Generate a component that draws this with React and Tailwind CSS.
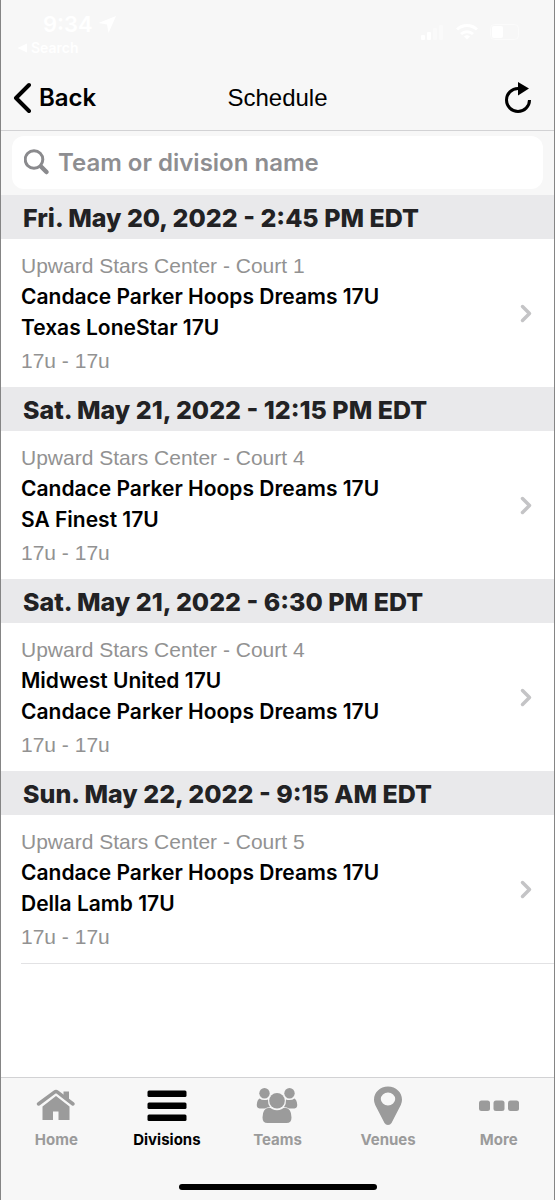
import { useState } from "react";

const games = [
  {
    time: "Fri. May 20, 2022 - 2:45 PM EDT",
    venue: "Upward Stars Center - Court 1",
    home: "Candace Parker Hoops Dreams 17U",
    away: "Texas LoneStar 17U",
    division: "17u - 17u",
  },
  {
    time: "Sat. May 21, 2022 - 12:15 PM EDT",
    venue: "Upward Stars Center - Court 4",
    home: "Candace Parker Hoops Dreams 17U",
    away: "SA Finest 17U",
    division: "17u - 17u",
  },
  {
    time: "Sat. May 21, 2022 - 6:30 PM EDT",
    venue: "Upward Stars Center - Court 4",
    home: "Midwest United 17U",
    away: "Candace Parker Hoops Dreams 17U",
    division: "17u - 17u",
  },
  {
    time: "Sun. May 22, 2022 - 9:15 AM EDT",
    venue: "Upward Stars Center - Court 5",
    home: "Candace Parker Hoops Dreams 17U",
    away: "Della Lamb 17U",
    division: "17u - 17u",
  },
];

// tab icons share a 44x40 box
const tabs = [
  {
    name: "Home",
    icon: (
      <>
        <path d="M29.500 5.500h5.500v11l-5.500-5z" />
        <path
          d="M4.500 18L20.500 6.200q1.500-1.100 3 0L39 18"
          fill="none"
          stroke="currentColor"
          strokeWidth="3.500"
          strokeLinecap="round"
        />
        <path d="M22 10L35.500 20.500V34h-11v-8.500H19V34H8.500V20.500z" />
      </>
    ),
  },
  {
    name: "Divisions",
    icon: (
      <>
        <rect x="2.500" y="4.500" width="39" height="6.500" rx="1.500" />
        <rect x="2.500" y="16.500" width="39" height="6.500" rx="1.500" />
        <rect x="2.500" y="28.500" width="39" height="6.500" rx="1.500" />
      </>
    ),
  },
  {
    name: "Teams",
    icon: (
      <>
        <circle cx="9.500" cy="7.300" r="5.200" />
        <circle cx="34.500" cy="7.300" r="5.200" />
        <circle cx="22" cy="14.700" r="7.800" />
        <path d="M4.500 12.500q2 1.500 5 1.500 2 0 3.500-.5-.3 4.500 2 7.500-3 .2-5 1.500H4.500Q1.500 22 1.800 18.500q.3-4.500 2.700-6z" />
        <path d="M39.500 12.500q-2 1.500-5 1.500-2 0-3.500-.5.3 4.500-2 7.500 3 .2 5 1.500h5.500q3-.5 2.700-4-.3-4.500-2.700-6z" />
        <path d="M14 21.800q1.500 0 3 1.100 5 2.600 10 0 1.500-1.100 3-1.100 6.500.7 6.500 9.700 0 5.500-5 5.500h-19q-5 0-5-5.500 0-9 6.500-9.700z" />
      </>
    ),
  },
  {
    name: "Venues",
    icon: (
      <path
        fillRule="evenodd"
        d="M22 .5C14 .5 8 6.500 8 13.700q0 2.800 1.200 5.300l9.300 18q1.200 2 3.500 2t3.500-2l9.300-18Q36 16.500 36 13.700C36 6.500 30 .5 22 .5zM22 6.500a7.200 6.500 0 1 1 0 13 7.200 6.500 0 1 1 0-13z"
      />
    ),
  },
  {
    name: "More",
    icon: (
      <>
        <rect x="2" y="14.500" width="11" height="10.500" rx="2.500" />
        <rect x="16.500" y="14.500" width="11" height="10.500" rx="2.500" />
        <rect x="31" y="14.500" width="11" height="10.500" rx="2.500" />
      </>
    ),
  },
];

function StatusBar() {
  return (
    <div className="flex h-[66px] items-start justify-between pt-3 pr-8 pl-4 text-white">
      <div>
        <div className="flex items-center gap-1 pl-[26px] text-[22px] leading-6 font-semibold">
          9:34
          <svg className="size-5" viewBox="0 0 20 20" fill="currentColor">
            <path d="M19 2l-7.500 17-1.500-8.500L1.500 9z" />
          </svg>
        </div>
        <a href="#search" className="flex items-center gap-1 text-sm leading-6 font-semibold">
          <svg className="size-2.5" viewBox="0 0 10 10" fill="currentColor">
            <path d="M10 0.500v9L0.500 5z" />
          </svg>
          Search
        </a>
      </div>
      <div className="flex items-center gap-3 pt-3">
        <svg className="h-4 w-6" viewBox="0 0 24 16" fill="currentColor">
          <rect x="1" y="11" width="4" height="5" rx="1" />
          <rect x="7" y="8" width="4" height="8" rx="1" />
          <rect x="13" y="4" width="4" height="12" rx="1" opacity="0.400" />
          <rect x="19" y="1" width="4" height="15" rx="1" opacity="0.400" />
        </svg>
        <svg className="h-4 w-[22px]" viewBox="0 0 22 16" fill="none" stroke="currentColor" strokeWidth="3">
          <path d="M1 5.500a14.500 14.500 0 0 1 20 0M5 10a9 9 0 0 1 12 0" />
          <path d="M11 15.500l-3-3a4.500 4.500 0 0 1 6 0z" fill="currentColor" stroke="none" />
        </svg>
        <svg className="h-4 w-8" viewBox="0 0 32 16">
          <rect x="0.500" y="0.500" width="28" height="15" rx="4" fill="none" stroke="currentColor" opacity="0.500" />
          <rect x="2" y="2" width="11" height="12" rx="2" fill="currentColor" />
        </svg>
      </div>
    </div>
  );
}

function GameRow({ game }) {
  return (
    <li>
      <h2 className="bg-[#e9e9eb] pt-0.5 pl-[22px] text-[25px] leading-[42px] font-extrabold text-[#222224]">
        {game.time}
      </h2>
      <button className="flex w-full items-center justify-between py-[11px] pr-5 pl-5 text-left text-[21px]">
        <span className="block">
          <span className="block font-['Liberation_Sans',sans-serif] leading-[31px] text-[#929292]">
            {game.venue}
          </span>
          <span className="block leading-[31px] font-semibold text-black">{game.home}</span>
          <span className="block leading-[31px] font-semibold text-black">{game.away}</span>
          <span className="mt-0.5 block font-['Liberation_Sans',sans-serif] leading-[31px] text-[#929292]">
            {game.division}
          </span>
        </span>
        <svg
          className="h-5 w-4 text-[#c4c4c6]"
          viewBox="0 0 16 20"
          fill="none"
          stroke="currentColor"
          strokeWidth="3.500"
          strokeLinecap="round"
          strokeLinejoin="round"
        >
          <path d="M4.500 3.500l7 7-7 7" />
        </svg>
      </button>
    </li>
  );
}

export default function App() {
  const [query, setQuery] = useState("");
  const [active, setActive] = useState("Divisions");

  const shown = games.filter((g) =>
    `${g.home} ${g.away} ${g.division}`.toLowerCase().includes(query.toLowerCase())
  );

  return (
    <div className="flex min-h-screen flex-col border-x border-[#858585] bg-white font-['Inter',sans-serif]">
      <header className="border-b border-[#d2d2d4] bg-[#f7f7f7]">
        <StatusBar />
        <div className="grid h-16 grid-cols-[1fr_auto_1fr] items-center px-3">
          <button className="flex items-center gap-2 text-2xl font-semibold text-black">
            <svg
              className="h-8 w-[18px]"
              viewBox="0 0 18 32"
              fill="none"
              stroke="currentColor"
              strokeWidth="4"
              strokeLinecap="round"
              strokeLinejoin="round"
            >
              <path d="M16 3L3 16l13 13" />
            </svg>
            Back
          </button>
          <h1 className="font-['Liberation_Sans',sans-serif] text-2xl text-black">Schedule</h1>
          <button aria-label="Refresh" className="mr-2.5 justify-self-end">
            <svg className="h-8 w-7" viewBox="0 0 28 32" fill="none">
              <path d="M14 6.500a11.500 11.500 0 1 0 11.500 11.500" stroke="#000" strokeWidth="3" />
              <path d="M14 0l11 6.500-11 7z" fill="#000" />
            </svg>
          </button>
        </div>
      </header>

      <div className="bg-[#f7f7f7] px-[11px] pt-[5px] pb-1.5">
        <label className="flex h-[53px] items-center gap-1.5 rounded-xl bg-white px-3">
          <svg
            className="size-7 shrink-0 text-[#8a8a8d]"
            viewBox="0 0 28 28"
            fill="none"
            stroke="currentColor"
            strokeWidth="3"
            strokeLinecap="round"
          >
            <circle cx="10" cy="10.500" r="8.800" />
            <path d="M17 17.500l5.500 5.500" strokeWidth="4.500" />
          </svg>
          <input
            type="text"
            aria-label="Team or division name"
            placeholder="Team or division name"
            value={query}
            onChange={(e) => setQuery(e.target.value)}
            className="w-full bg-transparent text-2xl font-semibold text-black outline-none placeholder:text-[#8e8e91]"
          />
        </label>
      </div>

      <main className="flex-1">
        <ul>
          {shown.map((game) => (
            <GameRow key={game.time} game={game} />
          ))}
        </ul>
        <hr className="ml-5 border-[#e2e2e4]" />
      </main>

      <footer className="border-t border-[#d2d2d4] bg-[#f7f7f7] pb-2.5">
        <nav className="grid grid-cols-5 pt-2">
          {tabs.map((tab) => (
            <button
              key={tab.name}
              onClick={() => setActive(tab.name)}
              className={`flex flex-col items-center gap-1 text-[15px] leading-5 font-bold ${
                active === tab.name ? "text-black" : "text-[#9b9b9b]"
              }`}
            >
              <svg className="h-10 w-11" viewBox="0 0 44 40" fill="currentColor">
                {tab.icon}
              </svg>
              {tab.name}
            </button>
          ))}
        </nav>
        <div className="mx-auto mt-[34px] h-1.5 w-[198px] rounded-full bg-black" />
      </footer>
    </div>
  );
}
